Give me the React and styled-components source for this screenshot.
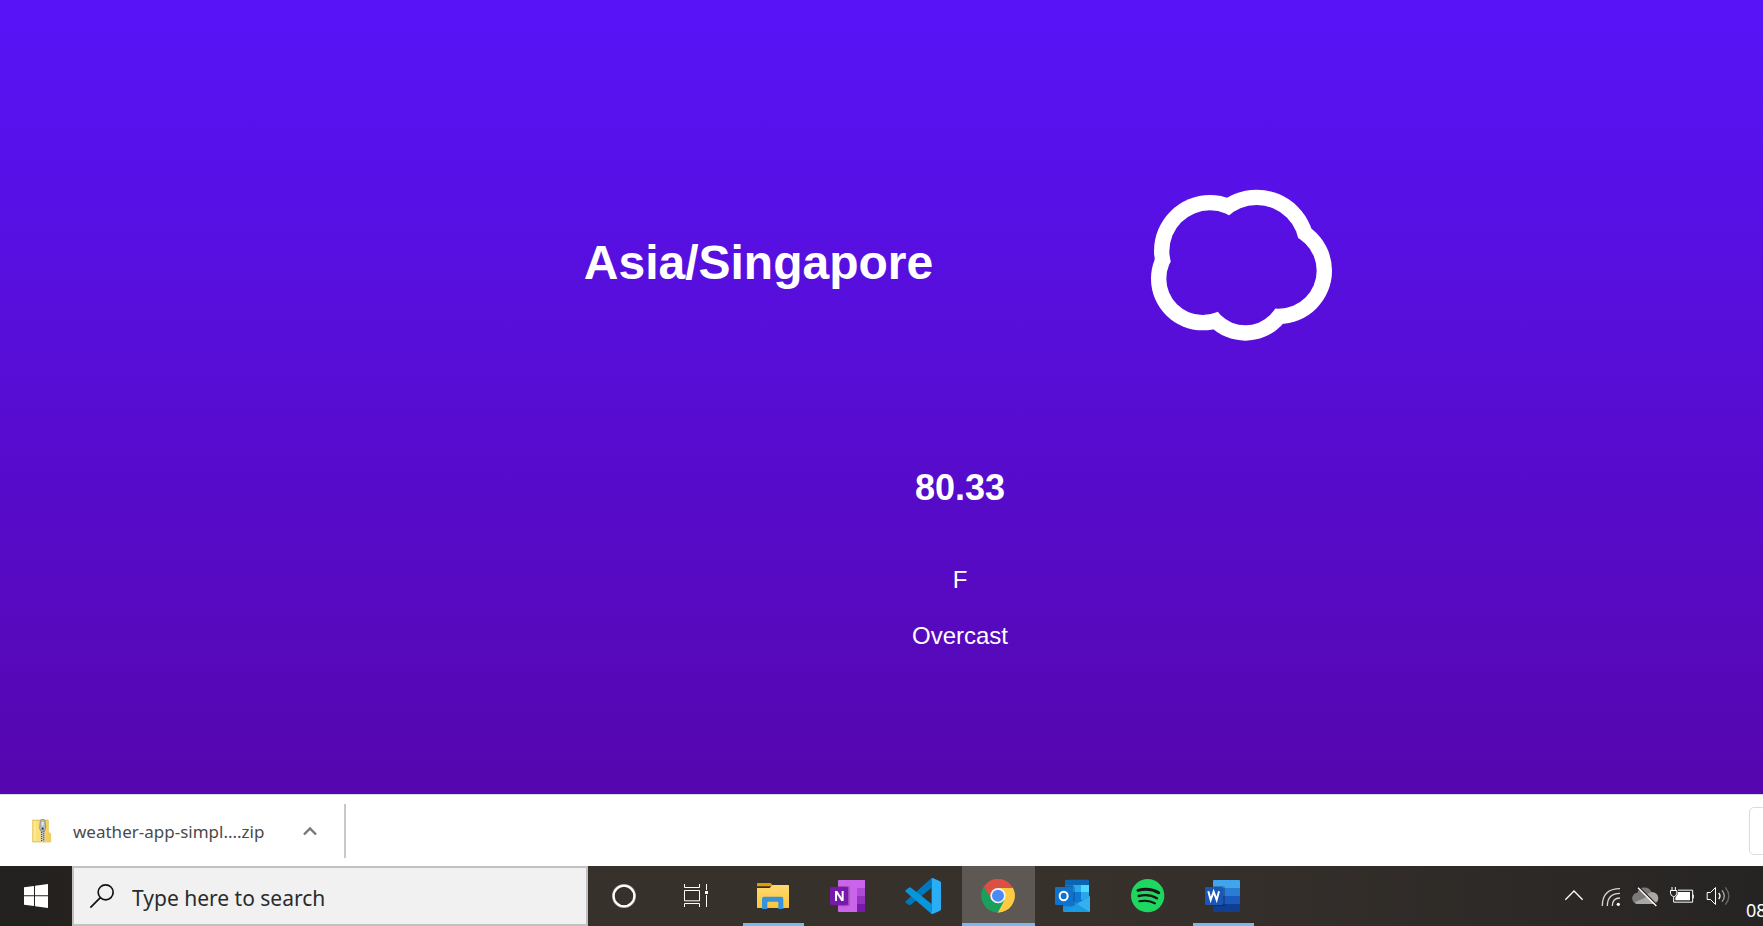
import React from "react";
import styled, { createGlobalStyle } from "styled-components";

const uiFont = '"Noto Sans", "Open Sans", sans-serif';

const GlobalStyle = createGlobalStyle`
  * { box-sizing: border-box; }
  body { margin: 0; overflow: hidden; }
`;

const Screen = styled.div`
  display: flex;
  flex-direction: column;
  height: 100vh;
  overflow: hidden;
`;

const Weather = styled.main`
  flex: 1;
  min-height: 0;
  display: flex;
  flex-direction: column;
  align-items: center;
  padding: 185px 0 0 157px;
  color: #fff;
  font-family: "Liberation Sans", Arial, sans-serif;
  background: linear-gradient(#5814f8, #5606ae);
`;

const Location = styled.section`
  display: flex;
  align-items: center;
  gap: 215px;
`;

const Timezone = styled.h1`
  margin: 0;
  padding-bottom: 4px;
  font-size: 48px;
  line-height: 56px;
`;

const Temperature = styled.section`
  display: flex;
  flex-direction: column;
  align-items: center;
  gap: 28px;
  padding-top: 123px;
`;

const Degree = styled.h2`
  margin: 0 0 30px;
  font-size: 36px;
  line-height: 40px;
`;

const Reading = styled.p`
  margin: 0;
  font-size: 24px;
  line-height: 28px;
`;

const DownloadBar = styled.section`
  flex: none;
  display: flex;
  align-items: center;
  height: 72px;
  overflow: hidden;
  border-top: 1px solid #d8d8dc;
  background: #fff;
  font-family: ${uiFont};
`;

const DownloadItem = styled.div`
  display: flex;
  align-items: center;
  height: 54px;
  padding: 0 20px 0 32px;
  border-right: 2px solid #c8c8c8;
`;

const FileLink = styled.a`
  display: flex;
  align-items: center;
  gap: 21px;
  width: 264px;
  color: #4a4a4a;
  font-size: 17px;
  line-height: 24px;
  white-space: nowrap;
  text-decoration: none;
`;

const FileName = styled.span`
  padding-top: 3px;
`;

const PlainButton = styled.button`
  display: flex;
  align-items: center;
  justify-content: center;
  flex: none;
  height: 100%;
  padding: 0;
  border: 0;
  background: none;
`;

const ShowAll = styled.button`
  flex: none;
  width: 110px;
  height: 48px;
  margin: 0 -96px 0 auto;
  border: 1px solid #dadce0;
  border-radius: 5px;
  background: #fff;
`;

const Taskbar = styled.footer`
  flex: none;
  display: flex;
  align-items: stretch;
  height: 60px;
  background: linear-gradient(90deg, #222120 0, #25221f 4%, #37312c 34%, #37312c 62%, #2e2a27 85%, #262423 100%);
  font-family: ${uiFont};
`;

const SystemButton = styled(PlainButton)`
  width: 72px;
`;

const SearchBox = styled.label`
  display: flex;
  align-items: center;
  gap: 18px;
  flex: none;
  width: 516px;
  padding-left: 16px;
  border: 2px solid #c1c1c1;
  background: #f1f1f1;
`;

const SearchInput = styled.input`
  flex: 1;
  min-width: 0;
  padding: 3px 0 0;
  border: 0;
  outline: 0;
  background: none;
  font-family: inherit;
  font-size: 21px;
  line-height: 28px;
  &::placeholder { color: #2b2b2b; opacity: 1; }
`;

const Apps = styled.nav`
  display: flex;
  gap: 2px;
  padding-left: 5px;
`;

const AppButton = styled(PlainButton)`
  position: relative;
  width: 73px;
  background: ${(p) => (p.$active ? "#5d5854" : "none")};
  &::after {
    content: "";
    position: absolute;
    bottom: 0;
    left: ${(p) => (p.$active ? "0" : "6px")};
    right: ${(p) => (p.$active ? "0" : "6px")};
    height: 3px;
    background: ${(p) => (p.$open ? "#76b9ed" : "transparent")};
  }
`;

const Tray = styled.div`
  display: flex;
  flex: none;
  margin-left: auto;
`;

const TrayButton = styled(PlainButton)`
  width: 36px;
`;

const Clock = styled.time`
  width: 27px;
  padding: 32px 0 0 10px;
  overflow: hidden;
  color: #fff;
  font-size: 18px;
  line-height: 24px;
`;

const CLOUD = [
  [240, 243, 168],
  [380, 233, 174],
  [446, 302, 160],
  [346, 361, 151],
  [218, 326, 155],
];

function CloudIcon() {
  return (
    <svg width="188" height="160" viewBox="54 45 564 480" role="img" aria-label="Cloudy">
      <mask id="cloud-inside" maskUnits="userSpaceOnUse" x="54" y="45" width="564" height="480">
        <rect x="54" y="45" width="564" height="480" fill="#fff" />
        {CLOUD.map(([x, y, r]) => <circle key={x} cx={x} cy={y} r={r - 46} fill="#000" />)}
      </mask>
      <g mask="url(#cloud-inside)" fill="#fff">
        {CLOUD.map(([x, y, r]) => <circle key={x} cx={x} cy={y} r={r} />)}
      </g>
    </svg>
  );
}

function ZipIcon() {
  return (
    <svg width="20" height="24" viewBox="97 96 60 72" aria-hidden="true">
      <path d="M99 99h47v38h4l3 4v24H99z" fill="#f6d560" stroke="#e3b93c" strokeWidth="2" />
      <path d="M102 102h20v60h-20z" fill="#fdeb9b" />
      <path d="M108 102h14v60h-14z" fill="#fbe07a" />
      <path d="M141 138h10v26h-10z" fill="#f5cf52" />
      <path d="M123 128h12v36h-12z" fill="#cfcfcf" />
      <path d="M126 129v34M132 131v32" stroke="#4c4c4c" strokeWidth="4" strokeDasharray="3 3" />
      <path d="M122 100q7-6 14 0l2 24-4 9h-10l-4-9z" fill="#b9bcc0" stroke="#777" strokeWidth="2" />
      <rect x="126" y="104" width="6" height="12" rx="3" fill="#e8e8e8" />
      <rect x="126" y="122" width="6" height="6" fill="#3d3d3d" />
    </svg>
  );
}

function AppIcon({ x, width = 37, children }) {
  return (
    <svg width={width} height="36" viewBox={`${x} 54 ${width * 3} 108`} aria-hidden="true">
      {children}
    </svg>
  );
}

const CortanaIcon = () => (
  <AppIcon x={138} width={36}>
    <circle cx="192" cy="108" r="32" fill="none" stroke="#aaa7a4" strokeWidth="8" />
    <circle cx="192" cy="108" r="31" fill="none" stroke="#fff" strokeWidth="6" />
  </AppIcon>
);

const TaskViewIcon = () => (
  <AppIcon x={354} width={36}>
    <g fill="none" stroke="#fff" strokeWidth="3">
      <path d="M373.500 72v10.500h45V72M373.500 141v-10.500h45V141M373.500 91.500h45v31h-45zM439.500 72v18M439.500 105v36" />
    </g>
    <rect x="435" y="93" width="9" height="9" fill="#fff" />
  </AppIcon>
);

const ExplorerIcon = () => (
  <AppIcon x={585}>
    <defs>
      <linearGradient id="folder" x2="0" y2="1"><stop stopColor="#ffda70" /><stop offset="1" stopColor="#f9c73b" /></linearGradient>
    </defs>
    <path d="M591 71q0-2 2-2h37q3 0 5 3l3 7h-47z" fill="#e29c06" />
    <path d="M591 84h38l8-9h48q2 0 2 2v65q0 2-2 2h-92q-2 0-2-2z" fill="url(#folder)" />
    <path d="M606 147v-31q0-6 6-6h52q6 0 6 6v31h-15v-19q0-3-3-3h-27q-3 0-3 3v19z" fill="#3892dc" />
  </AppIcon>
);

const OneNoteIcon = () => (
  <AppIcon x={810}>
    <path d="M837 60h78v96h-78q-3 0-3-3V63q0-3 3-3z" fill="#ca64ea" />
    <path d="M891 84h24v24h-24z" fill="#ae4bd5" />
    <path d="M891 108h24v24h-24z" fill="#9332bf" />
    <path d="M891 132h24v24h-24z" fill="#7719aa" />
    <path d="M834 78h30q5 0 5 5v50q0 6-6 6h-29z" fill="#000" opacity=".22" />
    <rect x="810" y="81" width="54" height="54" rx="4" fill="#7719aa" />
    <path d="M825 123V93h7l13 20V93h6v30h-7l-13-20v20z" fill="#fff" />
  </AppIcon>
);

const CodeIcon = () => (
  <AppIcon x={15}>
    <path d="M17 124l78-70v29l-63 51q-3 2-6 0l-9-6q-2-2 0-4z" fill="#0078bd" />
    <path d="M17 91l9-8q3-3 7 0l62 49v30L17 95q-2-2 0-4z" fill="#0795dc" />
    <path d="M95 54l3 0 22 10q3 2 3 5v78q0 3-3 5l-22 10-6-2q3-1 3-6z" fill="#2aaef5" />
  </AppIcon>
);

const ChromeIcon = () => (
  <AppIcon x={240}>
    <path d="M294 107L250.700 82A50 50 0 0 1 337.300 82z" fill="#dd4f43" />
    <path d="M294 107L337.300 82A50 50 0 0 1 294 157z" fill="#fccb41" />
    <path d="M294 107L294 157A50 50 0 0 1 250.700 82z" fill="#1a9f5c" />
    <path d="M294 84h45.500l-2.200-2A50 50 0 0 0 250.700 82l23.300 36z" fill="#dd4f43" />
    <path d="M294 84h44.500A50 50 0 0 1 291 157l23-38z" fill="#fccb41" />
    <path d="M252 80l22 38q20 14 40 1l-20 38A50 50 0 0 1 252 80z" fill="#1a9f5c" />
    <circle cx="294" cy="107" r="23" fill="#f4f5f5" />
    <circle cx="294" cy="107" r="18" fill="#4a8af4" />
  </AppIcon>
);

const OutlookIcon = () => (
  <AppIcon x={465}>
    <path d="M498 59h66q3 0 3 3v48h-72V62q0-3 3-3z" fill="#0b65b5" />
    <path d="M495 75h24v24h-24z" fill="#1076cf" />
    <path d="M519 75h24v24h-24z" fill="#29a8ea" />
    <path d="M543 75h24v21h-24z" fill="#50d9ff" />
    <path d="M495 96h24v24h-24z" fill="#0a5cad" />
    <path d="M519 96h24v34h-24z" fill="#0f78d4" />
    <path d="M543 96h24v24h-24z" fill="#28a8ea" />
    <path d="M489 105l41 25 40-22v45q0 3-3 3h-75q-3 0-3-3z" fill="#1b91df" />
    <path d="M570 108l-78 48h75q3 0 3-3z" fill="#33b1ef" />
    <path d="M530 131l40 25h-78z" fill="#199be3" />
    <path d="M495 78h26q4 0 4 5v50q0 6-6 6h-30v-34z" fill="#06345f" opacity=".28" />
    <rect x="465" y="81" width="54" height="54" rx="4" fill="#0f72cc" />
    <ellipse cx="491" cy="108" rx="12" ry="13" fill="none" stroke="#fff" strokeWidth="6" />
  </AppIcon>
);

const SpotifyIcon = () => (
  <AppIcon x={690}>
    <circle cx="743" cy="107" r="50" fill="#1ed760" />
    <g fill="none" stroke="#191414" strokeLinecap="round">
      <path d="M714 91q35-9 62 7" strokeWidth="9" />
      <path d="M716 108q31-8 55 7" strokeWidth="7" />
      <path d="M718 124q27-6 47 6" strokeWidth="6" />
    </g>
  </AppIcon>
);

const WordIcon = () => (
  <AppIcon x={915}>
    <path d="M942 60h75q3 0 3 3v21h-81V63q0-3 3-3z" fill="#41a5ee" />
    <path d="M939 84h81v24h-81z" fill="#2b7cd3" />
    <path d="M939 108h81v24h-81z" fill="#185abd" />
    <path d="M939 132h81v21q0 3-3 3h-75q-3 0-3-3z" fill="#103f91" />
    <path d="M939 78h31q5 0 5 5v50q0 6-6 6h-30z" fill="#000" opacity=".22" />
    <rect x="915" y="81" width="54" height="54" rx="4" fill="#1b56b5" />
    <path d="M925 94l7 26 9-25 9 25 7-26" fill="none" stroke="#fff" strokeWidth="6" />
  </AppIcon>
);

function TrayIcon({ x, children }) {
  return (
    <svg width="36" height="36" viewBox={`${x} 276 108 108`} fill="none" stroke="#fff" strokeWidth="4" aria-hidden="true">
      {children}
    </svg>
  );
}

const APPS = [
  { name: "File Explorer", Icon: ExplorerIcon, open: true },
  { name: "OneNote", Icon: OneNoteIcon },
  { name: "Visual Studio Code", Icon: CodeIcon },
  { name: "Chrome", Icon: ChromeIcon, open: true, active: true },
  { name: "Outlook", Icon: OutlookIcon },
  { name: "Spotify", Icon: SpotifyIcon },
  { name: "Word", Icon: WordIcon, open: true },
];

export default function App() {
  return (
    <Screen>
      <GlobalStyle />
      <Weather>
        <Location>
          <Timezone>Asia/Singapore</Timezone>
          <CloudIcon />
        </Location>
        <Temperature>
          <Degree>80.33</Degree>
          <Reading>F</Reading>
          <Reading>Overcast</Reading>
        </Temperature>
      </Weather>

      <DownloadBar>
        <DownloadItem>
          <FileLink href="#download"><ZipIcon /><FileName>weather-app-simpl....zip</FileName></FileLink>
          <PlainButton aria-label="Download options">
            <svg width="28" height="20" viewBox="-14 -10 28 20" aria-hidden="true">
              <path d="M-6 3.500L0-2.500L6 3.500" fill="none" stroke="#777" strokeWidth="2.400" />
            </svg>
          </PlainButton>
        </DownloadItem>
        <ShowAll aria-label="Show all" />
      </DownloadBar>

      <Taskbar>
        <SystemButton aria-label="Start">
          <svg width="24" height="24" viewBox="72 294 72 72" fill="#fff" aria-hidden="true">
            <path d="M72 304l30-4v28H72zM105 299l39-5v34h-39zM72 331h30v29l-30-4zM105 331h39v35l-39-5z" />
          </svg>
        </SystemButton>
        <SearchBox>
          <svg width="24" height="24" viewBox="270 294 72 72" fill="none" stroke="#111" strokeWidth="5" aria-hidden="true">
            <circle cx="317" cy="319" r="22.500" />
            <path d="M301 335l-30 30" />
          </svg>
          <SearchInput type="text" aria-label="Search" placeholder="Type here to search" />
        </SearchBox>
        <SystemButton aria-label="Cortana"><CortanaIcon /></SystemButton>
        <SystemButton aria-label="Task view"><TaskViewIcon /></SystemButton>
        <Apps>
          {APPS.map(({ name, Icon, open, active }) => (
            <AppButton key={name} aria-label={name} $open={open} $active={active}><Icon /></AppButton>
          ))}
        </Apps>
        <Tray>
          <TrayButton aria-label="Hidden icons">
            <TrayIcon x={78}><path d="M106 341l26-26 26 26" /></TrayIcon>
          </TrayButton>
          <TrayButton aria-label="Network">
            <TrayIcon x={186}>
              <path d="M217 360q0-52 53-52M232 360q0-38 38-38M247 360q0-24 23-24" stroke="#d8d7d6" />
              <circle cx="265" cy="355" r="5" fill="#fff" stroke="none" />
            </TrayIcon>
          </TrayButton>
          <TrayButton aria-label="OneDrive">
            <TrayIcon x={294}>
              <g stroke="none">
                <path d="M325 354a14 14 0 0 1-3-34 23 23 0 0 1 43-1 17 17 0 0 1 4 35z" fill="#7c7a79" />
                <path d="M349 334a18 18 0 1 1 22 20h-48q-7 0-9-5z" fill="#a9a8a7" />
              </g>
              <path d="M327 303l55 55" stroke="#2b2826" />
              <path d="M324 305l55 55" />
            </TrayIcon>
          </TrayButton>
          <TrayButton aria-label="Battery">
            <TrayIcon x={402}>
              <path d="M444 312.500h44v36h-57v-15M426 303v9M436 303v9M421.500 313.500h19v8q0 8-9 11-10-3-10-11zM490 326v11" strokeWidth="3" />
              <path d="M443 318h37v25h-44v-8l7-10z" fill="#fff" stroke="none" />
            </TrayIcon>
          </TrayButton>
          <TrayButton aria-label="Volume">
            <TrayIcon x={510}>
              <path d="M531.500 319.500h10l15-15v51l-15-15h-10z" strokeWidth="3" />
              <path d="M566 321q8 9 0 18" />
              <path d="M576 313q14 17 0 34" stroke="#aaa8a7" />
              <path d="M586 304q21 26 0 52" stroke="#6b6967" />
            </TrayIcon>
          </TrayButton>
          <Clock>08</Clock>
        </Tray>
      </Taskbar>
    </Screen>
  );
}
